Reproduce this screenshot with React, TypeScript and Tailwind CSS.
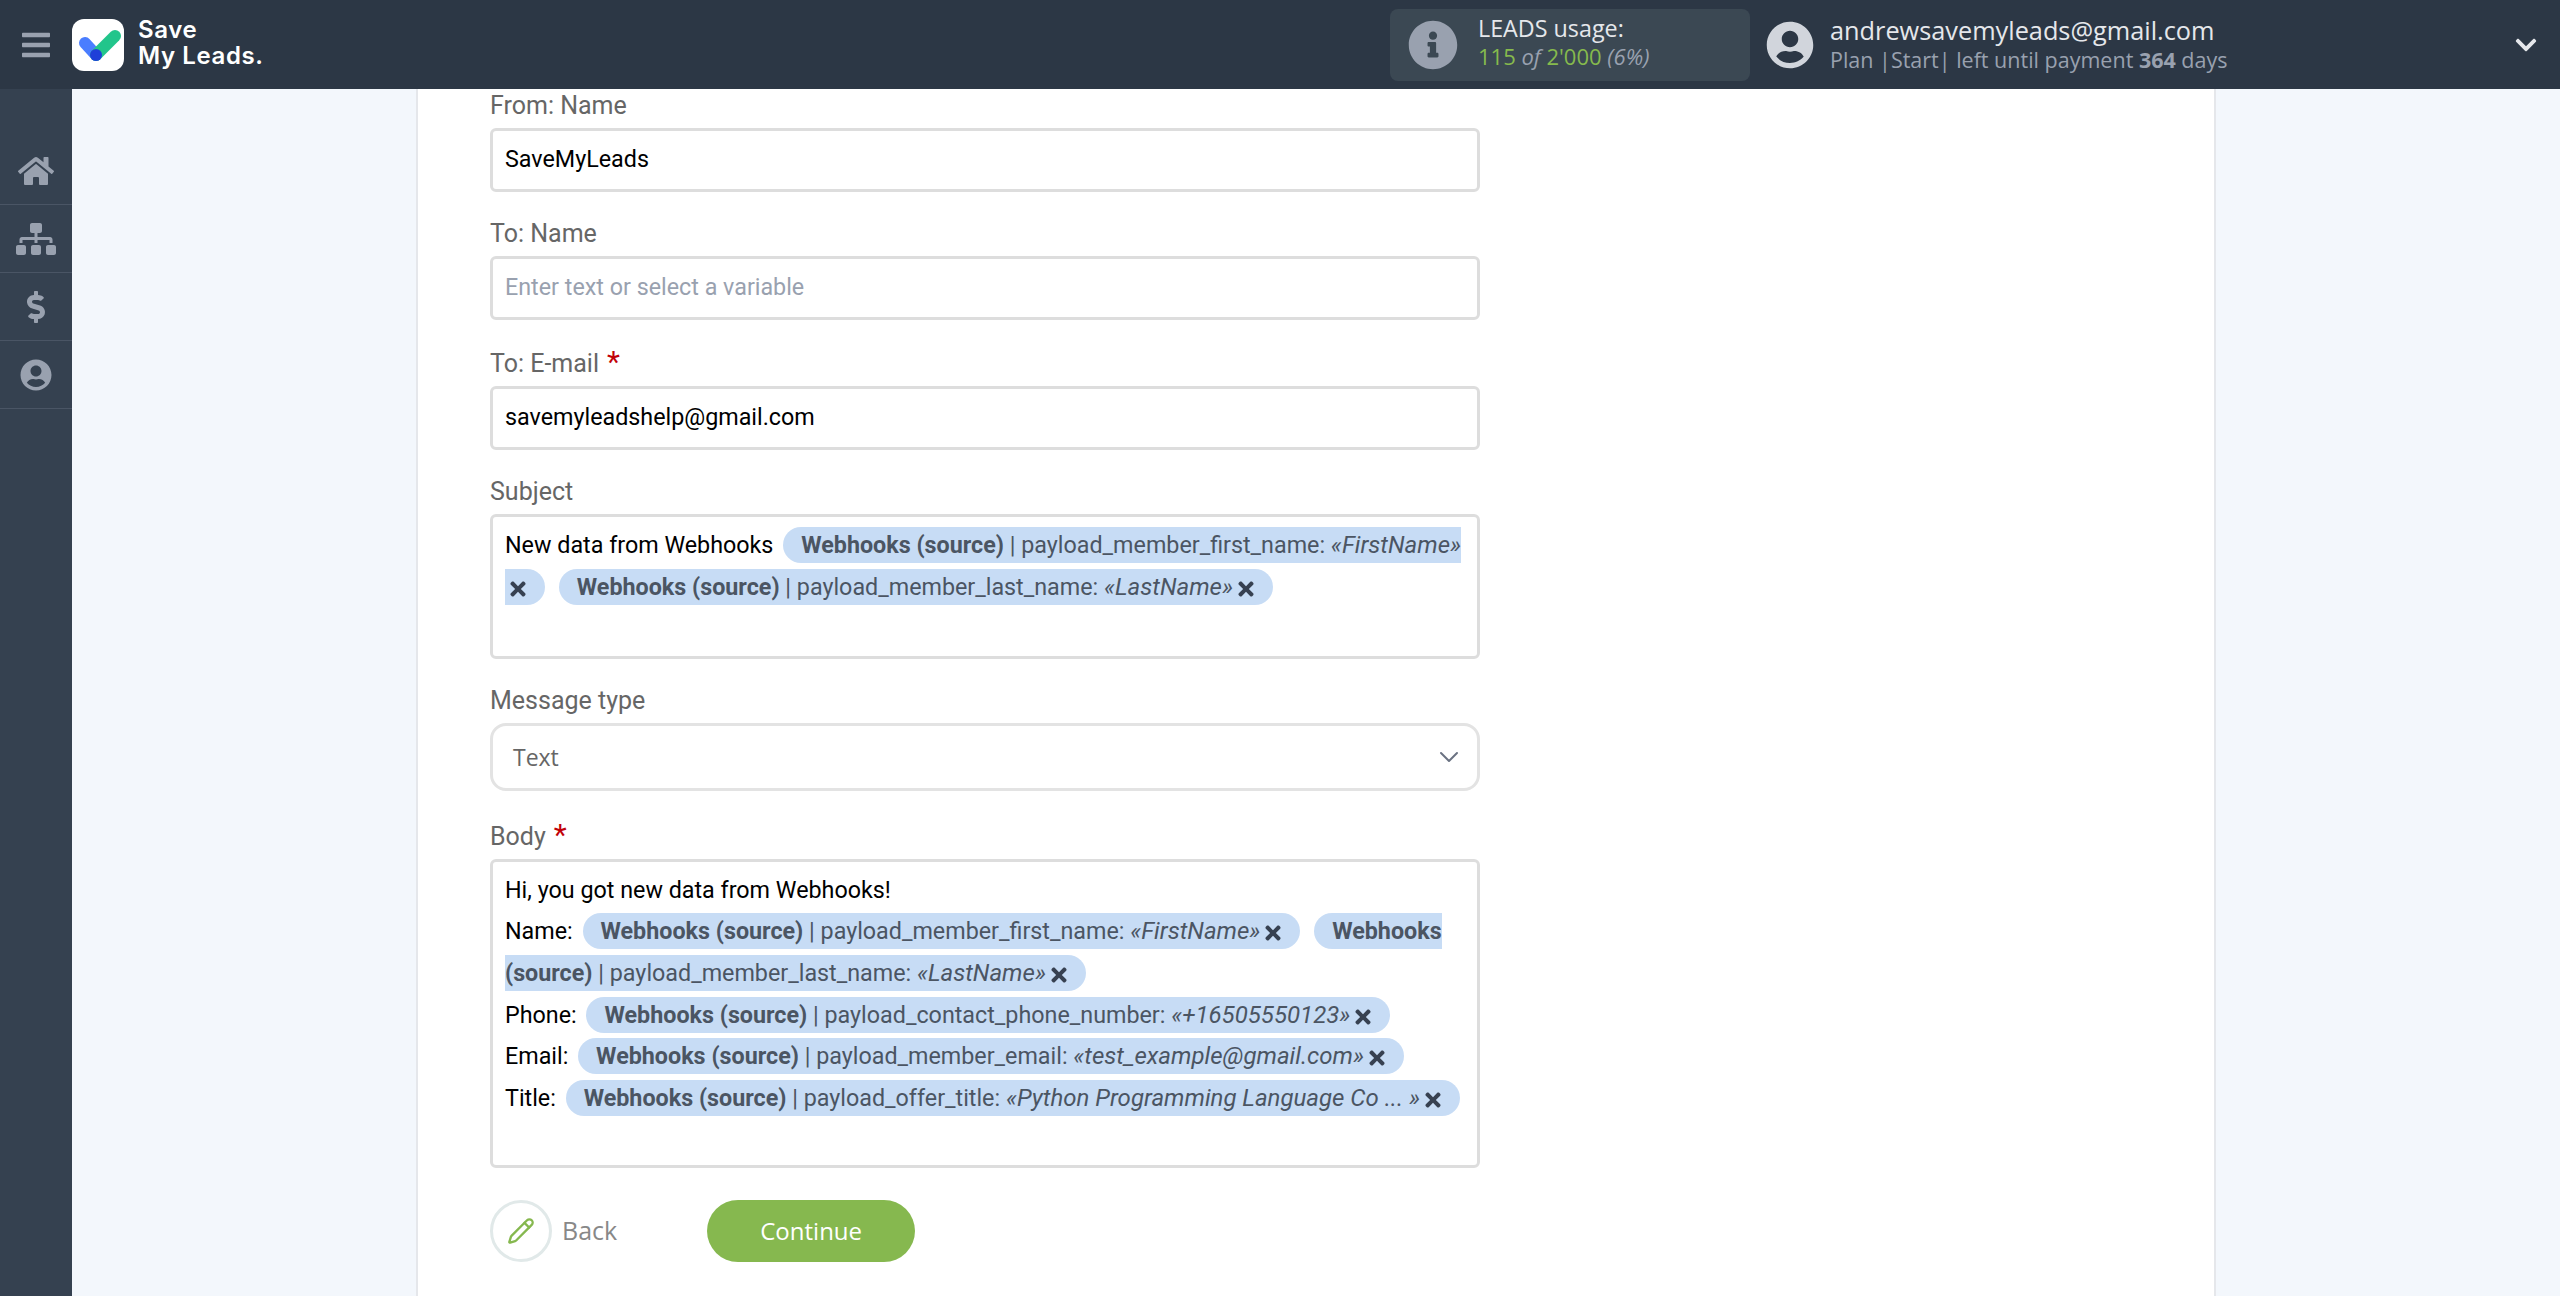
import { Pencil, ChevronDown } from "lucide-react";
import {
  FaBars,
  FaChevronDown,
  FaDollarSign,
  FaHome,
  FaInfoCircle,
  FaSitemap,
  FaTimes,
  FaUserCircle,
} from "react-icons/fa";

const navItems = [
  { icon: FaHome, size: "size-9" },
  { icon: FaSitemap, size: "size-10" },
  { icon: FaDollarSign, size: "size-8" },
  { icon: FaUserCircle, size: "size-8" },
];

function Chip({ field, value }: { field: string; value: string }) {
  return (
    <span className="mx-1 rounded-full bg-[#c7dcf5] py-1 pr-4 pl-4.5 text-[#4b5563]">
      <b className="font-bold">Webhooks (source)</b> | {field}: <i className="text-2xl">«{value}»</i>
      <FaTimes className="ml-0.5 inline size-5.5 align-[-5px] text-[#374151]" />
    </span>
  );
}

function Label({ text, required }: { text: string; required?: boolean }) {
  return (
    <div className={`mb-2 flex text-[25px] text-[#666] ${required ? "h-8.5" : "h-8"}`}>
      <span className={required ? "leading-10" : "leading-9"}>{text}</span>
      {required && <span className="ml-2 text-3xl leading-9 text-red-700">*</span>}
    </div>
  );
}

const inputClass =
  "h-16 w-full rounded-md border-3 border-[#ddd] px-3 pb-0.5 text-[23.3px] text-black outline-none placeholder:text-gray-400";
const richClass =
  "w-full rounded-md border-3 border-[#ddd] px-3 pt-2 text-[23.3px] leading-[41.6px] text-black";

export default function App() {
  return (
    <div className="flex h-screen flex-col overflow-hidden bg-[#f3f7fc] font-['Open_Sans',sans-serif]">
      {/* Top bar */}
      <header className="z-10 flex h-[89px] shrink-0 items-center bg-[#2c3745]">
        <div className="flex w-18 justify-center">
          <FaBars className="size-8 text-gray-400" />
        </div>
        <div className="flex size-13 items-center justify-center rounded-xl bg-white">
          <svg viewBox="0 0 52 52" className="size-13">
            <path d="M13 24 L24 36" stroke="#4a7dff" strokeWidth="12" strokeLinecap="round" />
            <path d="M24 36 L43 17" stroke="#22c58b" strokeWidth="12" strokeLinecap="round" />
            <circle cx="24" cy="36" r="6" fill="#1f3fd8" />
          </svg>
        </div>
        <div className="ml-3.5 pb-1 font-[Inter,sans-serif] text-2xl leading-6.5 font-semibold tracking-wide text-white">
          <div>Save</div>
          <div>My Leads.</div>
        </div>

        <div className="ml-auto flex h-18 w-90 items-center gap-5 rounded-lg bg-[#3b4853] px-4.5">
          <FaInfoCircle className="size-12.5 text-gray-400" />
          <div className="pb-1.5 leading-7">
            <div className="text-[23.3px] text-gray-200">LEADS usage:</div>
            <div className="text-[22px] text-[#86ba4d]">
              115 <i className="text-gray-400">of</i> 2'000 <i className="text-gray-400">(6%)</i>
            </div>
          </div>
        </div>

        <FaUserCircle className="ml-4 size-12 text-gray-300" />
        <div className="ml-4 w-171">
          <div className="text-[25.3px] leading-8 text-gray-200">andrewsavemyleads@gmail.com</div>
          <div className="pb-0.5 text-[21.5px] leading-7 text-gray-400">
            Plan |Start| left until payment <b>364</b> days
          </div>
        </div>
        <FaChevronDown className="mr-5.5 size-6 text-gray-200" />
      </header>

      <div className="flex min-h-0 flex-1">
        {/* Side nav */}
        <nav className="w-18 shrink-0 bg-[#354150] pt-12">
          {navItems.map((item, i) => (
            <div key={i} className="flex h-17 items-center justify-center border-b border-gray-600">
              <item.icon className={`${item.size} text-gray-400`} />
            </div>
          ))}
        </nav>

        <main className="flex min-w-0 flex-1 justify-center">
          <div className="w-[1800px] shrink-0 border-x-2 border-gray-200 bg-white pl-18">
            <div className="-mt-px w-247.5 font-[Roboto,sans-serif]">
              <Label text="From: Name" />
              <input className={inputClass} defaultValue="SaveMyLeads" readOnly />

              <div className="mt-6">
                <Label text="To: Name" />
                <input className={inputClass} placeholder="Enter text or select a variable" readOnly />
              </div>

              <div className="mt-6">
                <Label text="To: E-mail" required />
                <input className={inputClass} defaultValue="savemyleadshelp@gmail.com" readOnly />
              </div>

              <div className="mt-6">
                <Label text="Subject" />
                <div className={`${richClass} pb-1.5`}>
                  New data from Webhooks <Chip field="payload_member_first_name" value="FirstName" />{" "}
                  <Chip field="payload_member_last_name" value="LastName" />
                  <br />
                  <br />
                </div>
              </div>

              <div className="mt-6">
                <Label text="Message type" />
                <div className="flex h-17 items-center justify-between rounded-2xl border-3 border-[#e3e3e3] pr-3 pl-5 font-['Open_Sans',sans-serif] text-[23px] text-[#666]">
                  Text
                  <ChevronDown className="size-8 text-gray-500" strokeWidth={1.5} />
                </div>
              </div>

              <div className="mt-6.5">
                <Label text="Body" required />
                <div className={`${richClass} pb-1`}>
                  Hi, you got new data from Webhooks!
                  <br />
                  Name: <Chip field="payload_member_first_name" value="FirstName" />{" "}
                  <Chip field="payload_member_last_name" value="LastName" />
                  <br />
                  Phone: <Chip field="payload_contact_phone_number" value="+16505550123" />
                  <br />
                  Email: <Chip field="payload_member_email" value="test_example@gmail.com" />
                  <br />
                  Title: <Chip field="payload_offer_title" value="Python Programming Language Co ... " />
                  <br />
                  <br />
                </div>
              </div>

              <div className="mt-8 flex items-center font-['Open_Sans',sans-serif]">
                <div className="flex size-15.5 items-center justify-center rounded-full border-3 border-[#e1e9e9]">
                  <Pencil className="size-7 text-[#86b84f]" strokeWidth={2} />
                </div>
                <span className="ml-2.5 text-[25px] text-[#888]">Back</span>
                <button className="ml-22.5 h-15.5 w-52 rounded-full bg-[#86b84f] text-2xl text-white">Continue</button>
              </div>
            </div>
          </div>
        </main>
      </div>
    </div>
  );
}
